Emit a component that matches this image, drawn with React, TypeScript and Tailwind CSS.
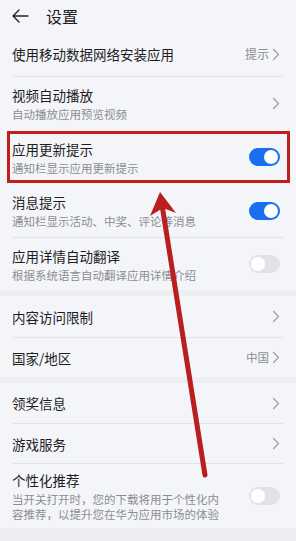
import React from "react";

const Chevron = () => (
  <svg width="8" height="13" viewBox="0 0 8 13" className="shrink-0">
    <path d="M1.5 1.5 L6.5 6.5 L1.5 11.5" fill="none" stroke="#9a9ca2" strokeWidth="1.2" strokeLinecap="round" strokeLinejoin="round" />
  </svg>
);

const Toggle = ({ on }: { on: boolean }) =>
  on ? (
    <div className="w-[31px] h-[18px] rounded-full bg-[#1a6ef0] flex items-center justify-end pr-[2px] shrink-0">
      <div className="w-[14px] h-[14px] rounded-full bg-white" />
    </div>
  ) : (
    <div className="w-[31px] h-[18px] rounded-full bg-[#e2e3e7] flex items-center justify-start pl-[2px] shrink-0">
      <div className="w-[14px] h-[14px] rounded-full bg-white" />
    </div>
  );

const Divider = () => <div className="mx-3 h-px bg-[#e3e4e8]" />;

const Row = ({
  title,
  sub,
  right,
  h,
}: {
  title: string;
  sub?: string[];
  right: React.ReactNode;
  h: string;
}) => (
  <div className={`flex items-center justify-between pl-3 pr-[16px] ${h}`}>
    <div className="flex flex-col">
      <div className="text-[13.5px] leading-[20px] text-[#1d1d1f]">{title}</div>
      {sub && (
        <div className="mt-[2px]">
          {sub.map((s, i) => (
            <div key={i} className="text-[11.5px] leading-[15px] text-[#8b8d93]">
              {s}
            </div>
          ))}
        </div>
      )}
    </div>
    {right}
  </div>
);

export default function App() {
  return (
    <div
      className="relative w-[296px] h-[541px] overflow-hidden bg-[#f4f5f9]"
      style={{ fontFamily: '"Noto Sans CJK SC", "Noto Sans", sans-serif' }}
    >
      {/* header */}
      <div className="flex items-center h-[32px] pl-[11px]">
        <svg width="18" height="16" viewBox="0 0 18 16">
          <path d="M17 8 H2 M8 2 L2 8 L8 14" fill="none" stroke="#222" strokeWidth="1.4" strokeLinecap="round" strokeLinejoin="round" />
        </svg>
        <div className="ml-[17px] text-[16px] text-[#1d1d1f]">设置</div>
      </div>

      <div className="h-[44px] flex items-center justify-between pl-3 pr-[16px]">
        <div className="text-[13.5px] text-[#1d1d1f]">使用移动数据网络安装应用</div>
        <div className="flex items-center gap-[3px]">
          <span className="text-[12px] text-[#8b8d93]">提示</span>
          <Chevron />
        </div>
      </div>
      <Divider />
      <Row h="h-[53px]" title="视频自动播放" sub={["自动播放应用预览视频"]} right={<Chevron />} />
      <Row h="h-[54px]" title="应用更新提示" sub={["通知栏显示应用更新提示"]} right={<Toggle on />} />
      <Row h="h-[53px]" title="消息提示" sub={["通知栏显示活动、中奖、评论等消息"]} right={<Toggle on />} />
      <Divider />
      <Row h="h-[52px]" title="应用详情自动翻译" sub={["根据系统语言自动翻译应用详情介绍"]} right={<Toggle on={false} />} />

      <div className="h-[6px] bg-[#eceef2]" />

      <Row h="h-[41px]" title="内容访问限制" right={<Chevron />} />
      <Divider />
      <Row
        h="h-[39px]"
        title="国家/地区"
        right={
          <div className="flex items-center gap-[3px]">
            <span className="text-[11.5px] text-[#8b8d93]">中国</span>
            <Chevron />
          </div>
        }
      />

      <div className="h-[6px] bg-[#eceef2]" />

      <Row h="h-[40px]" title="领奖信息" right={<Chevron />} />
      <Divider />
      <Row h="h-[39px]" title="游戏服务" right={<Chevron />} />
      <Divider />
      <Row
        h="h-[64px]"
        title="个性化推荐"
        sub={["当开关打开时，您的下载将用于个性化内", "容推荐，以提升您在华为应用市场的体验"]}
        right={<Toggle on={false} />}
      />
      <div className="h-[20px] bg-[#eceef2]" />

      {/* red highlight box */}
      <div className="absolute left-[7px] top-[131px] w-[283px] h-[52px] border-[3px] border-[#c01f1c]" />

      {/* arrow */}
      <svg className="absolute left-0 top-0" width="296" height="541" viewBox="0 0 296 541">
        <line x1="162" y1="205" x2="205" y2="475" stroke="#b81f1d" strokeWidth="5" strokeLinecap="round" />
        <path d="M160 192 L176 213 L163 208 L150 216 Z" fill="#b81f1d" />
      </svg>
    </div>
  );
}
